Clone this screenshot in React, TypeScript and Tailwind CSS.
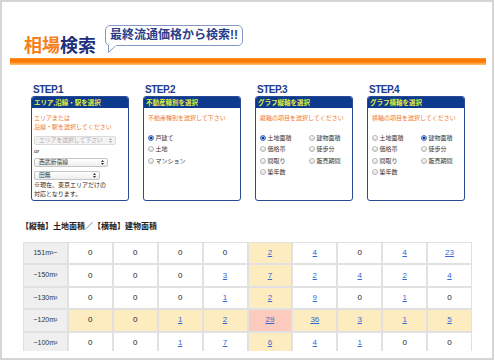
import React from 'react';
import { clsx } from 'clsx';

const Arrows = () => (
  <svg width="3" height="5" viewBox="0 0 3 5" className="shrink-0">
    <path d="M0 2 L1.5 0 L3 2 Z M0 3 L1.5 5 L3 3 Z" fill="currentColor" />
  </svg>
);

const Select = ({ text, w, disabled }: { text: string; w: string; disabled?: boolean }) => (
  <div
    className={clsx(
      'flex items-center justify-between h-[9px] rounded-[2px] border pl-[4px] pr-[3px] text-[5.8px] leading-none whitespace-nowrap overflow-hidden',
      w,
      disabled
        ? 'border-[#dcdcdc] bg-[#f3f3f3] text-[#ababab]'
        : 'border-[#c6c6c6] bg-[linear-gradient(#ffffff,#ededed)] text-[#333]'
    )}
  >
    <span className="min-w-0">{text}</span>
    <Arrows />
  </div>
);

const Radio = ({ label, checked }: { label: string; checked?: boolean }) => (
  <div className="flex items-center h-[11.5px]">
    {checked ? (
      <span className="w-[6px] h-[6px] rounded-full border border-[#4a76c4] bg-[radial-gradient(circle,#1d3a78_0_28%,#9cc0ef_38%,#5a8edb_100%)]" />
    ) : (
      <span className="w-[6px] h-[6px] rounded-full border border-[#b3b3b3] bg-[linear-gradient(#ffffff,#dddddd)]" />
    )}
    <span className="ml-[1.5px] text-[6px] leading-none text-[#333]">{label}</span>
  </div>
);

const StepBox = ({ step, title, children }: { step: string; title: string; children: React.ReactNode }) => (
  <div className="w-[98px]">
    <div className="pl-[2px] h-[11px] mb-[1px] text-[10px] leading-[11px] font-bold tracking-[-0.5px] text-[#1c3b8b]">
      {step}
    </div>
    <div className="h-[105px] border border-[#2a4a97] rounded-[3px] overflow-hidden bg-white">
      <div className="h-[11px] bg-[#0c3a8d] pl-[2px] text-[6.5px] leading-[11px] font-bold text-[#e6f03c]">
        {title}
      </div>
      {children}
    </div>
  </div>
);

const axisItems = [
  ['土地面積', '建物面積'],
  ['価格帯', '徒歩分'],
  ['間取り', '販売期間'],
  ['築年数', ''],
];

const rows: [string, number[]][] = [
  ['151m²~', [0, 0, 0, 0, 2, 4, 0, 4, 23]],
  ['~150m²', [0, 0, 0, 3, 7, 2, 4, 2, 4]],
  ['~130m²', [0, 0, 0, 1, 2, 9, 0, 1, 0]],
  ['~120m²', [0, 0, 1, 2, 29, 36, 3, 1, 5]],
  ['~100m²', [0, 0, 1, 7, 6, 4, 1, 0, 0]],
];

const HI_ROW = 3;
const HI_COL = 4;

export default function App() {
  return (
    <div className="w-[495px] h-[361px] bg-white font-['Liberation_Sans','Noto_Sans_CJK_JP',sans-serif]">
      <div className="w-[494px] h-[360px] border-2 border-[#d5d5d5] overflow-hidden bg-white">
        {/* Header */}
        <div className="flex items-start h-[56px] pt-[23px] pl-[22px]">
          <div className="mt-[10px] text-[18px] leading-[18px] font-bold font-['Noto_Sans_CJK_JP',sans-serif]">
            <span className="text-[#f4801e]">相場</span>
            <span className="text-[#1e2f7e]">検索</span>
          </div>
          <div className="relative ml-[9px] h-[21px] border border-[#8597c6] rounded-[5px] px-[4px] text-[12px] leading-[19px] font-bold text-[#2a3d8a] bg-white">
            最終流通価格から検索!!
            <svg width="12" height="9" viewBox="0 0 12 9" className="absolute left-[1px] top-[19px]">
              <path d="M1.5 0 L1.5 7.5 L9.5 0 Z" fill="white" />
              <path d="M1.5 0 L1.5 7.5 L9.5 0" fill="none" stroke="#8597c6" strokeWidth="1" />
              <rect x="2" y="0" width="7" height="1" fill="white" />
            </svg>
          </div>
        </div>

        {/* Orange rule */}
        <div className="ml-[8px] w-[476px] h-[7px] bg-[linear-gradient(to_bottom,#ff9a36_0%,#ff7a00_18%,#ff7a00_55%,#ffc27a_100%)]" />

        {/* Steps */}
        <div className="flex gap-[14px] pl-[29px] mt-[19px]">
          <StepBox step="STEP.1" title="エリア,沿線・駅を選択">
            <div className="flex flex-col pl-[2px]">
              <div className="mt-[6px] text-[6px] leading-[9px] text-[#f0743a]">
                エリアまたは
                <br />
                沿線・駅を選択してください
              </div>
              <div className="mt-[4px]">
                <Select text="エリアを選択して下さい" w="w-[82px]" disabled />
              </div>
              <div className="mt-[2px] text-[6px] leading-[8px] text-[#222]">or</div>
              <div className="mt-[3px]">
                <Select text="西武新宿線" w="w-[74px]" />
              </div>
              <div className="mt-[4px]">
                <Select text="田無" w="w-[66px]" />
              </div>
              <div className="mt-[1px] text-[6px] leading-[8.5px] text-[#222]">
                ※現在、東京エリアだけの
                <br />
                対応となります。
              </div>
            </div>
          </StepBox>

          <StepBox step="STEP.2" title="不動産種別を選択">
            <div className="pl-[4px]">
              <div className="mt-[6px] text-[6px] leading-[9px] text-[#f0743a]">不動産種別を選択して下さい</div>
              <div className="mt-[9px]">
                <Radio label="戸建て" checked />
                <Radio label="土地" />
                <Radio label="マンション" />
              </div>
            </div>
          </StepBox>

          <StepBox step="STEP.3" title="グラフ縦軸を選択">
            <div className="pl-[4px]">
              <div className="mt-[6px] text-[6px] leading-[9px] text-[#f0743a]">縦軸の項目を選択してください</div>
              <div className="mt-[9px] grid grid-cols-[49px_1fr]">
                {axisItems.map(([a, b]) => (
                  <React.Fragment key={a}>
                    <Radio label={a} checked={a === '土地面積'} />
                    {b ? <Radio label={b} /> : <div />}
                  </React.Fragment>
                ))}
              </div>
            </div>
          </StepBox>

          <StepBox step="STEP.4" title="グラフ横軸を選択">
            <div className="pl-[4px]">
              <div className="mt-[6px] text-[6px] leading-[9px] text-[#f0743a]">横軸の項目を選択してください</div>
              <div className="mt-[9px] grid grid-cols-[49px_1fr]">
                {axisItems.map(([a, b]) => (
                  <React.Fragment key={a}>
                    <Radio label={a} />
                    {b ? <Radio label={b} checked={b === '建物面積'} /> : <div />}
                  </React.Fragment>
                ))}
              </div>
            </div>
          </StepBox>
        </div>

        {/* Result table */}
        <div className="pl-[21px]">
          <div className="mt-[21px] -ml-[2px] h-[10px] text-[8px] leading-[10px] font-bold text-[#222]">
            【縦軸】土地面積／【横軸】建物面積
          </div>
          <div className="mt-[10px] h-[109px] overflow-hidden">
            <div className="w-[449px] grid grid-cols-[repeat(10,minmax(0,1fr))] auto-rows-[20.4px] gap-[2px] p-[1px] bg-[#e1e1e1]">
              {rows.map(([label, vals], r) => (
                <React.Fragment key={label}>
                  <div className="flex items-center justify-center bg-[#efefef] text-[7px] text-[#333]">{label}</div>
                  {vals.map((v, c) => (
                    <div
                      key={c}
                      className={clsx(
                        'flex items-center justify-center text-[8px]',
                        r === HI_ROW && c === HI_COL
                          ? 'bg-[#fdcbbd]'
                          : r === HI_ROW || c === HI_COL
                          ? 'bg-[#fdecc0]'
                          : 'bg-white'
                      )}
                    >
                      {v === 0 ? (
                        <span className="text-[#222]">0</span>
                      ) : (
                        <span className="text-[#3468d4] underline">{v}</span>
                      )}
                    </div>
                  ))}
                </React.Fragment>
              ))}
            </div>
          </div>
        </div>
      </div>
    </div>
  );
}
